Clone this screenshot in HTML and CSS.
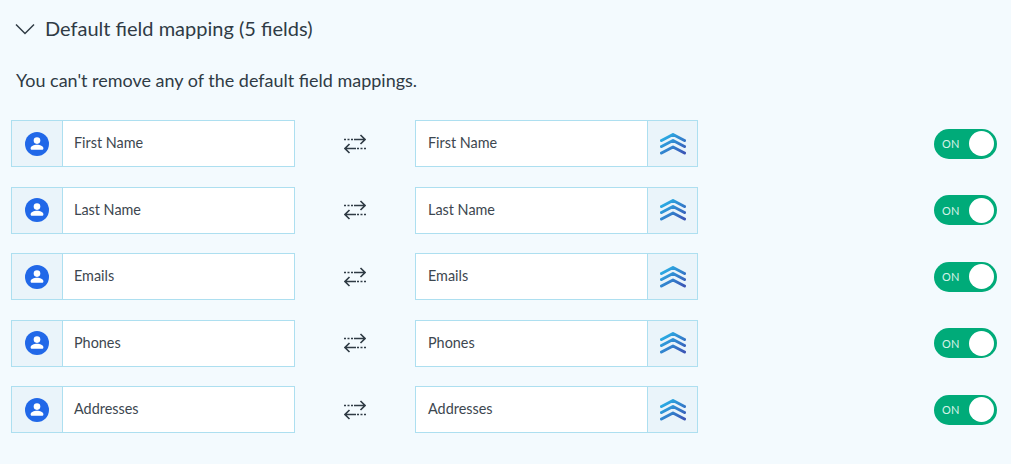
FILE: index.html
```html
<!DOCTYPE html>
<html lang="en">
<head>
    <meta charset="UTF-8">
    <title>Default field mapping</title>
    <link rel="stylesheet" href="styles.css">
</head>
<body>

<svg class="defs" width="0" height="0">
    <defs>
        <linearGradient id="stackGrad" x1="0" y1="0" x2="1" y2="1">
            <stop offset="0" stop-color="#28b8ea"/>
            <stop offset="1" stop-color="#3b55b5"/>
        </linearGradient>
        <symbol id="person" viewBox="0 0 24 24">
            <circle cx="12" cy="12" r="12" fill="#2168e8"/>
            <circle cx="12" cy="8.600" r="3.300" fill="#fff"/>
            <path d="M5.600 16.400c0-2.400 3.400-3.600 6.400-3.600s6.400 1.200 6.400 3.600c0 .9-.6 1.400-1.400 1.400H7c-.8 0-1.400-.5-1.400-1.400z" fill="#fff"/>
        </symbol>
        <symbol id="swap" viewBox="0 0 22 20">
            <path d="M0 5.500h2M3.500 5.500h2M7 5.500h2" stroke="#2f3b45" stroke-width="1.500" fill="none"/>
            <path d="M10 5.500h11M16.500 1l4.500 4.500-4.500 4.500" stroke="#2f3b45" stroke-width="1.600" fill="none"/>
            <path d="M22 14.500h-2M18.500 14.500h-2M15 14.500h-2" stroke="#2f3b45" stroke-width="1.500" fill="none"/>
            <path d="M12 14.500H1M5.500 10l-4.500 4.500 4.500 4.500" stroke="#2f3b45" stroke-width="1.600" fill="none"/>
        </symbol>
        <symbol id="stack" viewBox="0 0 26 22">
            <path d="M1.500 7.500 13 1.500l11.500 6M1.500 13.500 13 7.500l11.500 6M1.500 20 13 14l11.500 6" stroke="url(#stackGrad)" stroke-width="3" fill="none" stroke-linecap="round" stroke-linejoin="round"/>
        </symbol>
    </defs>
</svg>

<div class="section-head">
    <svg class="chevron" width="20" height="12" viewBox="0 0 20 12"><path d="M1 1.500l9 9 9-9" stroke="#2f3b45" stroke-width="1.500" fill="none"/></svg>
    <h2>Default field mapping (5 fields)</h2>
</div>

<p class="note">You can't remove any of the default field mappings.</p>

<div class="mappings">
    <div class="mapping-row">
        <div class="field">
            <span class="field-icon"><svg class="icon-person"><use href="#person"/></svg></span>
            <span class="field-name">First Name</span>
        </div>
        <svg class="icon-swap"><use href="#swap"/></svg>
        <div class="field field-target">
            <span class="field-name">First Name</span>
            <span class="field-icon"><svg class="icon-stack"><use href="#stack"/></svg></span>
        </div>
        <span class="toggle"><span class="toggle-label">ON</span><span class="toggle-knob"></span></span>
    </div>
    <div class="mapping-row">
        <div class="field">
            <span class="field-icon"><svg class="icon-person"><use href="#person"/></svg></span>
            <span class="field-name">Last Name</span>
        </div>
        <svg class="icon-swap"><use href="#swap"/></svg>
        <div class="field field-target">
            <span class="field-name">Last Name</span>
            <span class="field-icon"><svg class="icon-stack"><use href="#stack"/></svg></span>
        </div>
        <span class="toggle"><span class="toggle-label">ON</span><span class="toggle-knob"></span></span>
    </div>
    <div class="mapping-row">
        <div class="field">
            <span class="field-icon"><svg class="icon-person"><use href="#person"/></svg></span>
            <span class="field-name">Emails</span>
        </div>
        <svg class="icon-swap"><use href="#swap"/></svg>
        <div class="field field-target">
            <span class="field-name">Emails</span>
            <span class="field-icon"><svg class="icon-stack"><use href="#stack"/></svg></span>
        </div>
        <span class="toggle"><span class="toggle-label">ON</span><span class="toggle-knob"></span></span>
    </div>
    <div class="mapping-row">
        <div class="field">
            <span class="field-icon"><svg class="icon-person"><use href="#person"/></svg></span>
            <span class="field-name">Phones</span>
        </div>
        <svg class="icon-swap"><use href="#swap"/></svg>
        <div class="field field-target">
            <span class="field-name">Phones</span>
            <span class="field-icon"><svg class="icon-stack"><use href="#stack"/></svg></span>
        </div>
        <span class="toggle"><span class="toggle-label">ON</span><span class="toggle-knob"></span></span>
    </div>
    <div class="mapping-row">
        <div class="field">
            <span class="field-icon"><svg class="icon-person"><use href="#person"/></svg></span>
            <span class="field-name">Addresses</span>
        </div>
        <svg class="icon-swap"><use href="#swap"/></svg>
        <div class="field field-target">
            <span class="field-name">Addresses</span>
            <span class="field-icon"><svg class="icon-stack"><use href="#stack"/></svg></span>
        </div>
        <span class="toggle"><span class="toggle-label">ON</span><span class="toggle-knob"></span></span>
    </div>
</div>

</body>
</html>
```

FILE: styles.css
```css
html, body {
    height: 100%;
}
body {
    font-family: 'Lato', sans-serif;
    margin: 0;
    padding: 0 14px 0 11px;
    box-sizing: border-box;
    background-color: #f3fafe;
    color: #2f3b45;
    overflow: hidden;
}
.defs {
    position: absolute;
}
.section-head {
    display: flex;
    align-items: center;
    gap: 10px;
    padding: 16px 0 0 4px;
    height: 26px;
}
.section-head h2 {
    margin: 0;
    padding-bottom: 2px;
    font-size: 20px;
    font-weight: 400;
    line-height: 25px;
}
.chevron {
    flex: none;
}
.note {
    margin: 26px 0 0 5px;
    font-size: 17.980px;
    line-height: 24px;
}
.mappings {
    display: flex;
    flex-direction: column;
    gap: 19.5px;
    margin-top: 28px;
}
.mapping-row {
    display: flex;
    align-items: center;
    height: 47px;
}
.field {
    display: flex;
    align-items: stretch;
    box-sizing: border-box;
    width: 284px;
    height: 47px;
    border: 1px solid #addff0;
    background-color: #fff;
}
.field-target {
    width: 283px;
}
.field-name {
    flex: 1;
    padding-left: 11px;
    font-size: 14.400px;
    line-height: 43px;
    color: #3d4750;
}
.field-target .field-name {
    padding-left: 12px;
}
.field-icon {
    display: flex;
    align-items: center;
    justify-content: center;
    flex: none;
    width: 50px;
    background-color: #eaf4fa;
}
.field-target .field-icon {
    width: 49px;
}
.field:first-child .field-icon {
    border-right: 1px solid #addff0;
}
.field-name + .field-icon {
    border-left: 1px solid #addff0;
}
.icon-person {
    width: 24px;
    height: 24px;
}
.icon-swap {
    width: 22px;
    height: 20px;
    margin: 0 49px;
    flex: none;
}
.icon-stack {
    width: 26px;
    height: 22px;
}
.toggle {
    display: flex;
    align-items: center;
    justify-content: space-between;
    box-sizing: border-box;
    width: 63px;
    height: 30px;
    margin-left: auto;
    padding: 0 3px 0 8px;
    border-radius: 15px;
    background-color: #00ab79;
}
.toggle-label {
    font-size: 11px;
    color: #d6f2e8;
    letter-spacing: 0.3px;
}
.toggle-knob {
    width: 25px;
    height: 25px;
    border-radius: 50%;
    background-color: #fff;
}
```
